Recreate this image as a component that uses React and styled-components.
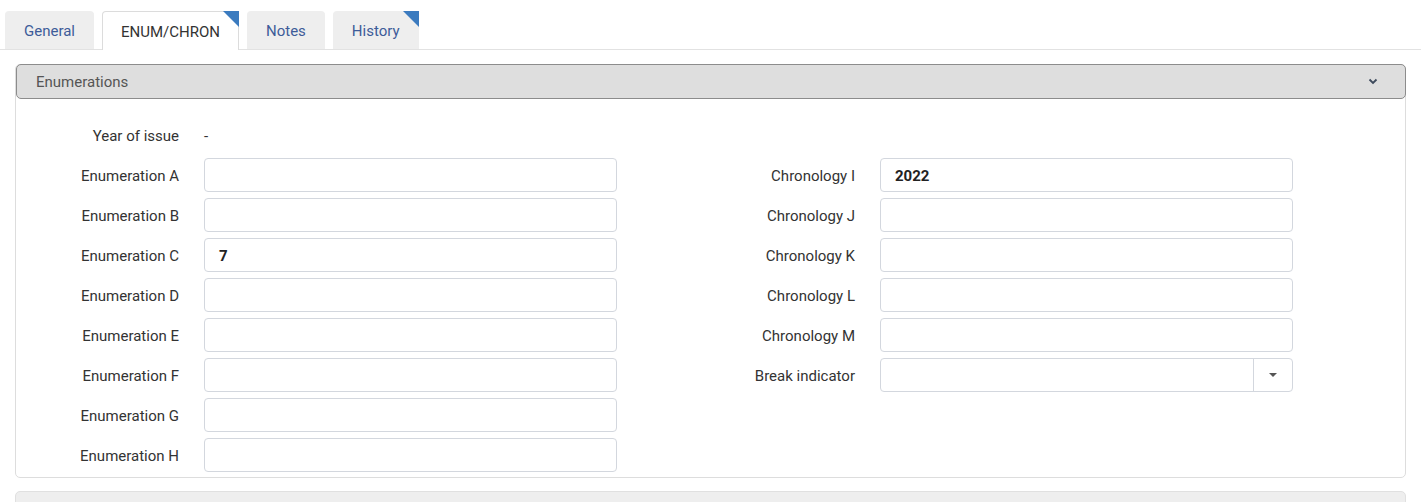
import React from "react";
import styled, { createGlobalStyle } from "styled-components";

const GlobalStyle = createGlobalStyle`
  body {
    margin: 0;
    background: #fff;
    font-family: Roboto, "Liberation Sans", Arial, sans-serif;
    font-size: 15px;
    color: #333;
  }
`;

const leftRows = [
  { label: "Enumeration A" },
  { label: "Enumeration B" },
  { label: "Enumeration C", value: "7" },
  { label: "Enumeration D" },
  { label: "Enumeration E" },
  { label: "Enumeration F" },
  { label: "Enumeration G" },
  { label: "Enumeration H" },
];

const rightRows = [
  { label: "Chronology I", value: "2022" },
  { label: "Chronology J" },
  { label: "Chronology K" },
  { label: "Chronology L" },
  { label: "Chronology M" },
  { label: "Break indicator", select: true },
];

function App() {
  return (
    <Page>
      <GlobalStyle />
      <TabBar>
        <Tab>General</Tab>
        <Tab active marked>
          ENUM/CHRON
        </Tab>
        <Tab>Notes</Tab>
        <Tab marked>History</Tab>
      </TabBar>
      <Content>
        <Card>
          <CardHeader>
            <span>Enumerations</span>
            <svg width="10" height="7" viewBox="0 0 10 7">
              <path
                d="M1.5 1.5 L5 5 L8.5 1.5"
                fill="none"
                stroke="#3d4a5c"
                strokeWidth="1.8"
              />
            </svg>
          </CardHeader>
          <CardBody>
            <Column>
              <Row>
                <Label>Year of issue</Label>
                <Static>-</Static>
              </Row>
              {leftRows.map((r) => (
                <Row key={r.label}>
                  <Label>{r.label}</Label>
                  <Input>{r.value}</Input>
                </Row>
              ))}
            </Column>
            <Column>
              <Row />
              {rightRows.map((r) => (
                <Row key={r.label}>
                  <Label>{r.label}</Label>
                  {r.select ? (
                    <Select>
                      <SelectValue />
                      <SelectButton>
                        <Caret />
                      </SelectButton>
                    </Select>
                  ) : (
                    <Input>{r.value}</Input>
                  )}
                </Row>
              ))}
            </Column>
          </CardBody>
        </Card>
        <NextCard />
      </Content>
    </Page>
  );
}

const Page = styled.div`
  padding-top: 11px;
  height: 502px;
  box-sizing: border-box;
  overflow: hidden;
`;

const TabBar = styled.div`
  display: flex;
  padding-left: 5px;
  border-bottom: 1px solid #e2e2e2;
  height: 38px;
`;

const Tab = styled.div`
  position: relative;
  box-sizing: border-box;
  padding: 1px 18px 0 18px;
  margin-right: 8px;
  display: flex;
  align-items: center;
  border-radius: 4px 4px 0 0;
  background: ${(p) => (p.active ? "#fff" : "#eeeeee")};
  color: ${(p) => (p.active ? "#333" : "#3d5c99")};
  border: 1px solid ${(p) => (p.active ? "#dcdcdc" : "#eeeeee")};
  border-bottom: none;
  height: ${(p) => (p.active ? "39px" : "38px")};
  &::after {
    content: "";
    display: ${(p) => (p.marked ? "block" : "none")};
    position: absolute;
    top: -1px;
    right: -1px;
    border-style: solid;
    border-width: 0 16px 16px 0;
    border-color: transparent #3b7bbf transparent transparent;
  }
`;

const Content = styled.div`
  padding: 14px 15px 0 15px;
`;

const Card = styled.div`
  width: 1391px;
  border: 1px solid #dddddd;
  border-radius: 5px;
  box-sizing: border-box;
`;

const CardHeader = styled.div`
  height: 35px;
  box-sizing: border-box;
  margin: -1px -1px 0 0;
  background: #dedede;
  border: 1px solid #8c8c8c;
  border-radius: 5px;
  display: flex;
  align-items: center;
  justify-content: space-between;
  padding: 0 27px 0 19px;
  color: #555;
`;

const CardBody = styled.div`
  display: grid;
  grid-template-columns: 676px 1fr;
  padding: 19px 0 5px 0;
`;

const Column = styled.div`
  display: flex;
  flex-direction: column;
  gap: 6px;
`;

const Row = styled.div`
  display: grid;
  grid-template-columns: 163px 413px;
  column-gap: 25px;
  align-items: center;
  height: 34px;
`;

const Label = styled.div`
  text-align: right;
  color: #333;
  padding-top: 1px;
`;

const Static = styled.div`
  color: #333;
  padding-top: 1px;
`;

const Input = styled.div`
  height: 34px;
  box-sizing: border-box;
  border: 1px solid #d3d7de;
  border-radius: 4px;
  padding: 1px 14px 0 14px;
  display: flex;
  align-items: center;
  font-weight: 700;
  color: #222;
`;

const Select = styled.div`
  height: 34px;
  box-sizing: border-box;
  border: 1px solid #d3d7de;
  border-radius: 4px;
  display: flex;
`;

const SelectValue = styled.div`
  flex: 1;
`;

const SelectButton = styled.div`
  width: 38px;
  border-left: 1px solid #d3d7de;
  display: flex;
  align-items: center;
  justify-content: center;
`;

const Caret = styled.span`
  width: 0;
  height: 0;
  border-left: 4px solid transparent;
  border-right: 4px solid transparent;
  border-top: 4px solid #555;
`;

const NextCard = styled.div`
  width: 1391px;
  height: 30px;
  margin-top: 13px;
  background: #eeeeee;
  border: 1px solid #e0e0e0;
  border-radius: 5px;
  box-sizing: border-box;
`;

export default App;
